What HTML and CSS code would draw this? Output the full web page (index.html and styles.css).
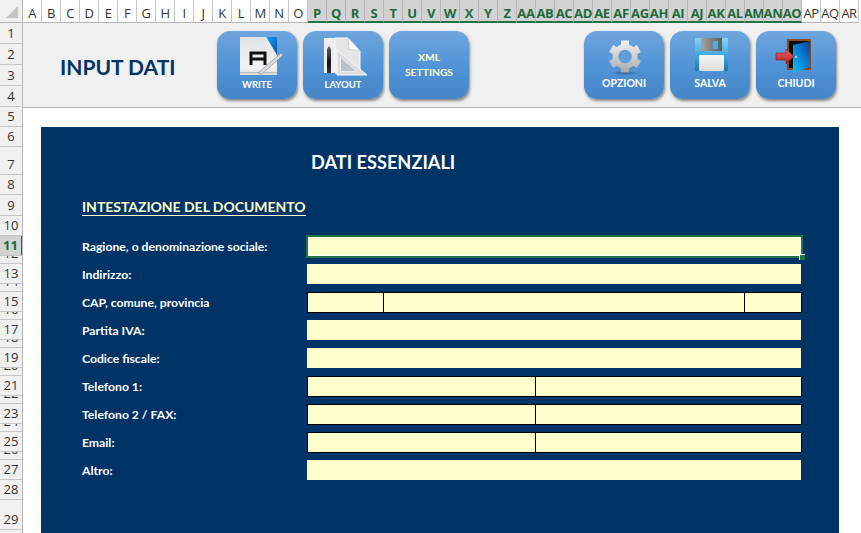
FILE: index.html
```html
<!DOCTYPE html>
<html lang="it">
<head>
    <meta charset="UTF-8">
    <title>Input dati</title>
    <link rel="stylesheet" href="styles.css">
</head>
<body>
    <div class="sheet">
        <div class="corner"><span class="corner-mark"></span></div>
        <div class="col-heads">
            <span>A</span><span>B</span><span>C</span><span>D</span><span>E</span><span>F</span><span>G</span><span>H</span><span>I</span><span>J</span><span>K</span><span>L</span><span>M</span><span>N</span><span>O</span>
            <span class="sel">P</span><span class="sel">Q</span><span class="sel">R</span><span class="sel">S</span><span class="sel">T</span><span class="sel">U</span><span class="sel">V</span><span class="sel">W</span><span class="sel">X</span><span class="sel">Y</span><span class="sel">Z</span><span class="sel">AA</span><span class="sel">AB</span><span class="sel">AC</span><span class="sel">AD</span><span class="sel">AE</span><span class="sel">AF</span><span class="sel">AG</span><span class="sel">AH</span><span class="sel">AI</span><span class="sel">AJ</span><span class="sel">AK</span><span class="sel">AL</span><span class="sel">AM</span><span class="sel">AN</span><span class="sel">AO</span>
            <span>AP</span><span>AQ</span><span>AR</span>
        </div>
        <div class="row-heads">
            <span class="h21">1</span><span class="h21">2</span><span class="h21">3</span><span class="h21">4</span><span>5</span><span>6</span><span class="tall">7</span><span>8</span><span class="h21">9</span><span>10</span>
            <span class="sel">11</span><span class="thin">12</span><span>13</span><span class="thin">14</span><span>15</span><span class="thin">16</span><span>17</span><span class="thin">18</span><span>19</span><span class="thin">20</span><span>21</span><span class="thin">22</span><span>23</span><span class="thin">24</span><span>25</span><span class="thin">26</span><span>27</span><span>28</span><span class="taller">29</span><span>30</span>
        </div>
        <div class="content">
            <div class="toolbar">
                <h1 class="page-title">INPUT DATI</h1>
                <div class="btn-group">
                    <button class="tool-btn">
                        <svg class="icon" viewBox="0 0 52 44">
                            <defs>
                                <linearGradient id="pageGrad" x1="0" y1="0" x2="0" y2="1"><stop offset="0" stop-color="#dfe2e4"/><stop offset="0.8" stop-color="#f3f3f3"/><stop offset="1" stop-color="#dadada"/></linearGradient>
                                <linearGradient id="cornerGrad" x1="0" y1="0" x2="1" y2="1"><stop offset="0" stop-color="#0fa6ee"/><stop offset="1" stop-color="#0a4fb0"/></linearGradient>
                            </defs>
                            <path d="M9 1h27l10 10v28H9z" fill="url(#pageGrad)"/>
                            <path d="M35 1h11v18z" fill="url(#cornerGrad)"/>
                            <path d="M35 1l1 8 6 4z" fill="#e8eef2"/>
                            <rect x="9" y="36" width="37" height="1" fill="#b9bcbc"/>
                            <path d="M20 29V17h14v12M20 23h14" fill="none" stroke="#111" stroke-width="3"/>
                            <path d="M27 37L50 17l2 2-21 19z" fill="#d9dcde" stroke="#848a90" stroke-width=".6"/>
                        </svg>
                        <span>WRITE</span>
                    </button>
                    <button class="tool-btn">
                        <svg class="icon" viewBox="0 0 52 44">
                            <defs><linearGradient id="penGrad" x1="0" y1="0" x2="0" y2="1"><stop offset="0" stop-color="#6a6a6a"/><stop offset="0.6" stop-color="#111"/><stop offset="1" stop-color="#333"/></linearGradient></defs>
                            <path d="M7 2h14v35H7z" fill="#eeeeee"/>
                            <path d="M10 13l2-3 2 3v24h-4z" fill="url(#penGrad)"/>
                            <path d="M18 2h13l12 13v22H18z" fill="#e6e6e6" stroke="#fafafa"/>
                            <path d="M31 2l1 11 11 2z" fill="#fbfbfb" stroke="#b5b5b5" stroke-width=".5"/>
                            <path d="M20 14l30 25H20zM24 22v13h15z" fill="#dcdcdc" fill-rule="evenodd" stroke="#f8f8f8"/>
                            <path d="M24 22v13h15z" fill="#b9c2c8"/>
                        </svg>
                        <span>LAYOUT</span>
                    </button>
                    <button class="tool-btn text-only"><span>XML</span><span>SETTINGS</span></button>
                </div>
                <div class="btn-group group-right">
                    <button class="tool-btn">
                        <svg class="icon" viewBox="0 0 52 44">
                            <defs>
                                <linearGradient id="gearGrad" gradientUnits="userSpaceOnUse" x1="0" y1="4" x2="0" y2="37"><stop offset="0" stop-color="#f4f4f4"/><stop offset="1" stop-color="#a8a8a8"/></linearGradient>
                                <radialGradient id="gearShadow"><stop offset="0" stop-color="#23486e" stop-opacity="0.7"/><stop offset="1" stop-color="#23486e" stop-opacity="0"/></radialGradient>
                            </defs>
                            <ellipse cx="27" cy="37" rx="14" ry="2" fill="url(#gearShadow)"/>
                            <path d="M27 20.500V4.500M27 20.500V36.500M27 20.500L40.900 12.500M27 20.500L40.900 28.500M27 20.500L13.100 12.500M27 20.500L13.100 28.500" stroke="url(#gearGrad)" stroke-width="8" fill="none"/>
                            <circle cx="27" cy="20.500" r="12.500" fill="url(#gearGrad)"/>
                            <circle cx="27" cy="20.500" r="6.700" fill="#5f9ddc"/>
                        </svg>
                        <span>OPZIONI</span>
                    </button>
                    <button class="tool-btn">
                        <svg class="icon" viewBox="0 0 52 44">
                            <defs>
                                <linearGradient id="diskGrad" x1="0" y1="0" x2="0" y2="1"><stop offset="0" stop-color="#84d6f2"/><stop offset="0.55" stop-color="#3fa5dc"/><stop offset="1" stop-color="#1f74b4"/></linearGradient>
                                <linearGradient id="shutterGrad" x1="0" y1="0" x2="1" y2="0"><stop offset="0" stop-color="#a4a4a4"/><stop offset="1" stop-color="#5a5a5a"/></linearGradient>
                                <linearGradient id="labelGrad" x1="0" y1="0" x2="0" y2="1"><stop offset="0" stop-color="#f6f6f6"/><stop offset="1" stop-color="#dcdcdc"/></linearGradient>
                            </defs>
                            <path d="M11 2h33v33H11z" fill="url(#diskGrad)"/>
                            <path d="M17 2h21v13H17z" fill="url(#shutterGrad)"/>
                            <rect x="29" y="5" width="5" height="8" fill="#45b4e4"/>
                            <rect x="15" y="19" width="25" height="16" rx="1" fill="url(#labelGrad)"/>
                        </svg>
                        <span>SALVA</span>
                    </button>
                    <button class="tool-btn">
                        <svg class="icon" viewBox="0 0 52 44">
                            <defs>
                                <linearGradient id="doorGrad" x1="0" y1="1" x2="1" y2="0"><stop offset="0" stop-color="#08c4f4"/><stop offset="0.55" stop-color="#0a7ad0"/><stop offset="1" stop-color="#0a3a94"/></linearGradient>
                                <linearGradient id="arrowGrad" x1="0" y1="0" x2="0" y2="1"><stop offset="0" stop-color="#f06a6a"/><stop offset="1" stop-color="#b3151c"/></linearGradient>
                            </defs>
                            <path d="M17 3h24v31H17z" fill="#8a4a20"/>
                            <path d="M19 5h20v27H19z" fill="#0c0c0c"/>
                            <path d="M23 9L40 5v26l-17 6z" fill="url(#doorGrad)"/>
                            <circle cx="26" cy="21" r="1" fill="#dddddd"/>
                            <path d="M6 17h10v-4l8 7.500-8 7.500v-4H6z" fill="url(#arrowGrad)" stroke="#8a1a1f" stroke-width=".6"/>
                        </svg>
                        <span>CHIUDI</span>
                    </button>
                </div>
            </div>
            <div class="white-area">
                <div class="panel">
                    <h2 class="panel-title">DATI ESSENZIALI</h2>
                    <h3 class="section-title"><span>INTESTAZIONE DEL DOCUMENTO</span></h3>
                    <div class="form">
                        <label>Ragione, o denominazione sociale:</label>
                        <div class="cell active"><i class="handle"></i></div>
                        <label>Indirizzo:</label>
                        <div class="cell"></div>
                        <label>CAP, comune, provincia</label>
                        <div class="cell split cap"><b></b><b></b><b></b></div>
                        <label>Partita IVA:</label>
                        <div class="cell"></div>
                        <label>Codice fiscale:</label>
                        <div class="cell"></div>
                        <label>Telefono 1:</label>
                        <div class="cell split half"><b></b><b></b></div>
                        <label>Telefono 2 / FAX:</label>
                        <div class="cell split half"><b></b><b></b></div>
                        <label>Email:</label>
                        <div class="cell split half"><b></b><b></b></div>
                        <label>Altro:</label>
                        <div class="cell"></div>
                    </div>
                </div>
            </div>
        </div>
    </div>
</body>
</html>
```

FILE: styles.css
```css
* {
    box-sizing: border-box;
}
html, body {
    margin: 0;
    height: 100%;
    overflow: hidden;
}
body {
    font-family: 'Lato', sans-serif;
    background-color: #ffffff;
}
.sheet {
    display: grid;
    grid-template-columns: 23px 838px;
    grid-template-rows: 23px 510px;
    width: 861px;
    height: 533px;
}
.corner {
    background-color: #f0f0f0;
    border-right: 1px solid #b5b5b5;
    border-bottom: 1px solid #b5b5b5;
    display: flex;
    align-items: flex-end;
    justify-content: flex-end;
    padding: 0 4px 4px 0;
}
.corner-mark {
    width: 0;
    height: 0;
    border-left: 12px solid transparent;
    border-bottom: 12px solid #c4c4c4;
}
.col-heads {
    display: flex;
    font-family: 'Open Sans', sans-serif;
    font-size: 13px;
    background-color: #ffffff;
    overflow: hidden;
}
.col-heads span {
    flex: 0 0 19px;
    height: 23px;
    display: flex;
    justify-content: center;
    line-height: 26px;
    color: #333333;
    white-space: nowrap;
    letter-spacing: -0.5px;
    border-right: 1px solid #c6c6c6;
    border-bottom: 1px solid #b5b5b5;
    overflow: hidden;
    background-color: #ffffff;
}
.col-heads span.sel {
    background-color: #d2d2d2;
    color: #1d6a3e;
    font-weight: 700;
    border-right-color: #b5b5b5;
    border-bottom: 2px solid #217346;
    letter-spacing: -0.3px;
}
.row-heads {
    display: flex;
    flex-direction: column;
    font-family: 'Open Sans', sans-serif;
    font-size: 13px;
    color: #333333;
    background-color: #f0f0f0;
    border-right: 1px solid #b5b5b5;
    overflow: hidden;
}
.row-heads span {
    flex: 0 0 20px;
    display: flex;
    align-items: flex-end;
    justify-content: center;
    line-height: 19px;
    border-bottom: 1px solid #c6c6c6;
    overflow: hidden;
}
.row-heads span.h21 {
    flex-basis: 21px;
}
.row-heads span.tall {
    flex-basis: 28px;
}
.row-heads span.taller {
    flex-basis: 30px;
}
.row-heads span.thin {
    flex-basis: 8px;
}
.row-heads span.sel {
    background-color: #d2d2d2;
    color: #1d6a3e;
    font-weight: 700;
    border-right: 2px solid #217346;
    margin-right: -1px;
}
.content {
    display: flex;
    flex-direction: column;
    min-width: 0;
}
.toolbar {
    flex: 0 0 85px;
    background-color: #f0f0f0;
    border-bottom: 1px solid #b5b5b5;
    display: flex;
    align-items: flex-start;
    padding-top: 8px;
}
.page-title {
    margin: 23px 0 0 37px;
    width: 157px;
    font-size: 21px;
    line-height: 25px;
    font-weight: 700;
    color: #003366;
    white-space: nowrap;
}
.btn-group {
    display: flex;
    gap: 6px;
}
.group-right {
    margin-left: 115px;
}
.tool-btn {
    width: 80px;
    height: 68px;
    padding: 5px 0 0;
    border: none;
    border-radius: 13px;
    background: linear-gradient(#6fa5dc, #4f92d6 55%, #4586c6);
    box-shadow: 1px 2px 3px rgba(0, 0, 0, 0.45);
    display: flex;
    flex-direction: column;
    align-items: center;
    color: #ffffff;
    font-family: 'Lato', sans-serif;
    font-size: 9.5px;
    line-height: 13px;
    font-weight: 700;
}
.group-right .tool-btn {
    font-size: 10.5px;
}
.group-right .icon {
    margin-bottom: -3px;
}
.tool-btn.text-only {
    justify-content: center;
    gap: 2px;
    padding: 0;
    font-size: 10.3px;
    color: #ffffcc;
}
.icon {
    flex: none;
    width: 52px;
    height: 44px;
    margin-bottom: -2px;
}
.white-area {
    flex: 1;
    padding: 19px 22px 0 18px;
}
.panel {
    height: 420px;
    background-color: #003366;
    padding-top: 21px;
}
.panel-title {
    margin: 0 0 0 270px;
    font-size: 18.2px;
    line-height: 28px;
    font-weight: 700;
    color: #ffffff;
    height: 28px;
}
.section-title {
    margin: 21px 0 0 41px;
    height: 20px;
    font-size: 14px;
    line-height: 20px;
    font-weight: 700;
    color: #ffffcc;
}
.section-title span {
    border-bottom: 1px solid #ffffcc;
    letter-spacing: -0.03px;
}
.form {
    margin: 19px 0 0 41px;
    display: grid;
    grid-template-columns: 225px 494px;
    grid-auto-rows: 20px;
    row-gap: 8px;
}
.form label {
    font-size: 12.2px;
    line-height: 22px;
    font-weight: 700;
    color: #ffffff;
    white-space: nowrap;
}
.cell {
    background-color: #ffffcc;
    position: relative;
}
.cell.active {
    margin: -1px -2px -2px -1px;
    border: 2px solid #217346;
    box-shadow: inset 0 0 0 1px #ffffff;
}
.handle {
    position: absolute;
    right: -4px;
    bottom: -4px;
    width: 6px;
    height: 6px;
    background-color: #217346;
    border: 1px solid #ffffff;
    border-width: 1px 0 0 1px;
}
.split {
    display: grid;
    background-color: #000000;
    border: 1px solid #000000;
    column-gap: 1px;
    margin: 0 -1px -1px 0;
}
.split b {
    background-color: #ffffcc;
}
.cap {
    grid-template-columns: 75px 360px 56px;
}
.half {
    grid-template-columns: 227px 265px;
}
```
